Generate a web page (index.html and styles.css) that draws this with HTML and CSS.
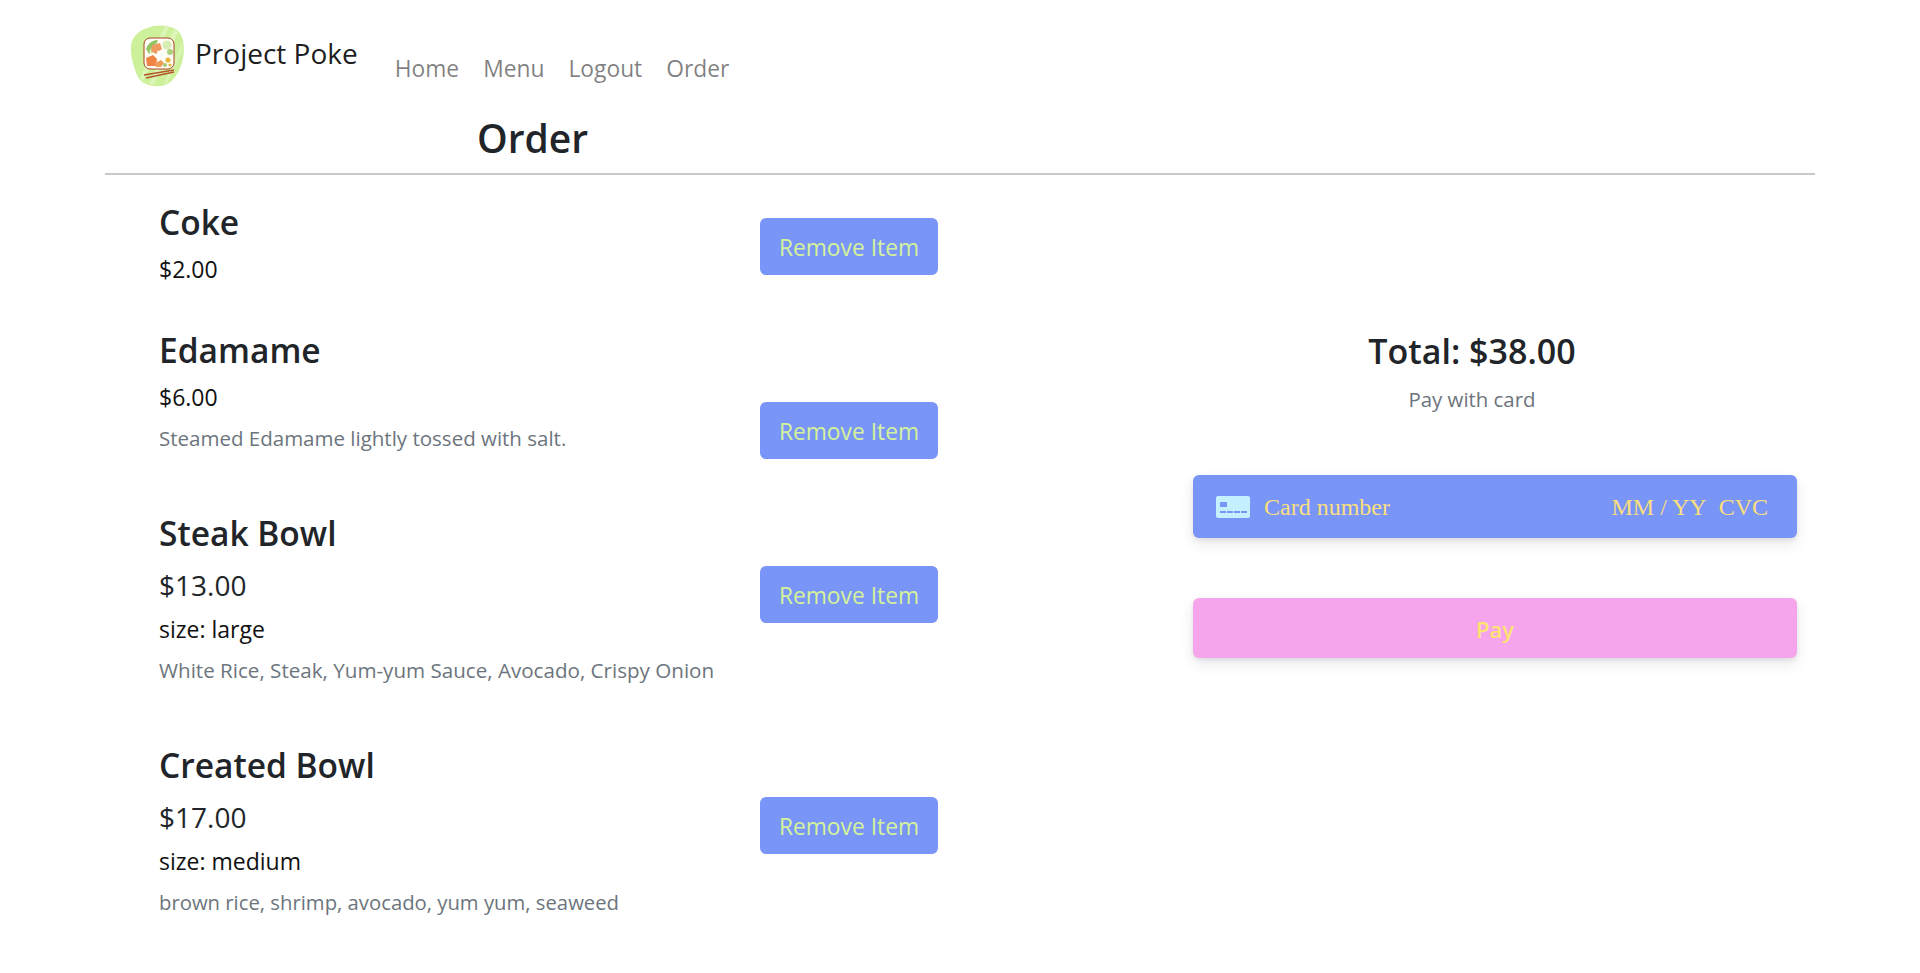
FILE: index.html
```html
<!DOCTYPE html>
<html lang="en">
<head>
    <meta charset="UTF-8">
    <meta name="viewport" content="width=device-width, initial-scale=1.0">
    <title>Project Poke</title>
    <link rel="stylesheet" href="styles.css">
</head>
<body>
    <div class="container">
        <nav class="navbar">
            <a class="brand" href="#">
                <svg class="brand-logo" viewBox="0 0 56 62" width="56" height="62">
                    <path d="M18 3C28 -1 41 0 48 5C55 11 56 23 54 33C52 45 44 60 32 61C20 62 11 58 8 50C5 42 1 31 2 21C3 12 9 6 18 3Z" fill="#cdf09b"/>
                    <path d="M36 1L40 2L14 56L11 53Z" fill="#dcf6b8"/>
                    <path d="M45 4L49 7L25 60L20 59Z" fill="#dcf6b8"/>
                    <path d="M53 18L54 26L38 58L34 60Z" fill="#d8f4b0"/>
                    <rect x="15" y="13" width="30" height="31" rx="6" fill="#fffdf5" stroke="#a8451f" stroke-width="1"/>
                    <path d="M17 24C19 18 24 15 29 15L26 22L20 29Z" fill="#8fc463"/>
                    <path d="M20 26L27 18L29 21L23 29Z" fill="#d6edb4"/>
                    <circle cx="38" cy="20" r="4.5" fill="#d6edb4"/>
                    <circle cx="41" cy="27" r="3" fill="#a9d27a"/>
                    <path d="M23 20L31 18L33 24L27 29L22 26Z" fill="#ef9a5e"/>
                    <path d="M17 33L24 30L28 34L27 41L18 41Z" fill="#ee8344"/>
                    <path d="M26 38L32 35L35 38L32 42L27 42Z" fill="#f09a5c"/>
                    <path d="M28 26L36 25L37 33L30 34Z" fill="#fdfdf8"/>
                    <circle cx="39" cy="35" r="2.6" fill="#e8b63c"/>
                    <circle cx="36" cy="40" r="2" fill="#9fca70"/>
                    <circle cx="41" cy="40" r="1.6" fill="#e8b63c"/>
                    <path d="M15 50L45 45M17 53L45 47" stroke="#b5552a" stroke-width="1.4"/>
                </svg>
                <span class="brand-name">Project Poke</span>
            </a>
            <ul class="nav-links">
                <li><a href="#">Home</a></li>
                <li><a href="#">Menu</a></li>
                <li><a href="#">Logout</a></li>
                <li><a href="#">Order</a></li>
            </ul>
        </nav>

        <h1 class="page-title">Order</h1>

        <div class="order-row">
            <div class="order-items">
                <div class="item item-coke">
                    <div class="item-info">
                        <h3>Coke</h3>
                        <p class="price-small">$2.00</p>
                    </div>
                    <button class="remove-btn">Remove Item</button>
                </div>
                <div class="item item-edamame">
                    <div class="item-info">
                        <h3>Edamame</h3>
                        <p class="price-small">$6.00</p>
                        <p class="desc">Steamed Edamame lightly tossed with salt.</p>
                    </div>
                    <button class="remove-btn">Remove Item</button>
                </div>
                <div class="item item-steak">
                    <div class="item-info">
                        <h3>Steak Bowl</h3>
                        <p class="price">$13.00</p>
                        <p class="size">size: large</p>
                        <p class="desc">White Rice, Steak, Yum-yum Sauce, Avocado, Crispy Onion</p>
                    </div>
                    <button class="remove-btn">Remove Item</button>
                </div>
                <div class="item item-created">
                    <div class="item-info">
                        <h3>Created Bowl</h3>
                        <p class="price">$17.00</p>
                        <p class="size">size: medium</p>
                        <p class="desc">brown rice, shrimp, avocado, yum yum, seaweed</p>
                    </div>
                    <button class="remove-btn">Remove Item</button>
                </div>
            </div>

            <div class="checkout">
                <h3 class="total">Total: $38.00</h3>
                <p class="pay-note">Pay with card</p>
                <div class="card-field">
                    <svg class="card-icon" viewBox="0 0 34 22" width="34" height="22">
                        <rect width="34" height="22" rx="2" fill="#c4f0ff"/>
                        <rect x="4" y="6" width="7" height="5" fill="#7995f7"/>
                        <path d="M4 16H31" stroke="#7995f7" stroke-width="2" stroke-dasharray="6 1"/>
                    </svg>
                    <span class="card-number">Card number</span>
                    <span class="card-date">MM / YY</span>
                    <span class="card-cvc">CVC</span>
                </div>
                <button class="pay-btn">Pay</button>
            </div>
        </div>
    </div>
</body>
</html>
```

FILE: styles.css
```css
* {
    box-sizing: border-box;
}

body {
    margin: 0;
    min-height: 100vh;
    font-family: "Open Sans", "Noto Sans", sans-serif;
    font-size: 24px;
    line-height: 36px;
    color: #212529;
    background-color: #fff;
}

a {
    text-decoration: none;
}

.container {
    width: 1710px;
    margin: 0 auto;
}

.navbar {
    display: flex;
    align-items: flex-start;
    height: 108px;
    padding: 25px 24px 0;
}

.brand {
    display: flex;
    align-items: flex-start;
    gap: 10px;
    color: rgba(0, 0, 0, 0.9);
    font-size: 28px;
    line-height: 45px;
}

.brand-logo {
    flex: none;
}

.brand-name {
    padding-top: 6px;
}

.nav-links {
    display: flex;
    gap: 24px;
    list-style: none;
    margin: 0;
    padding: 25px 0 0 37px;
}

.nav-links a {
    color: rgba(0, 0, 0, 0.5);
    font-size: 22.8px;
}

.page-title {
    margin: 0;
    height: 67px;
    padding-left: 372px;
    font-size: 39px;
    line-height: 60px;
    font-weight: 600;
    border-bottom: 2px solid #c8c8c8;
}

.order-row {
    display: flex;
}

.order-items {
    flex: none;
    width: 833px;
    padding: 25px 0 60px 54px;
}

.item {
    display: flex;
    align-items: center;
    justify-content: space-between;
}

.item-info {
    align-self: flex-start;
}

.item-coke {
    height: 92px;
}

.item-edamame {
    margin-top: 36px;
    height: 131px;
}

.item-edamame .remove-btn {
    align-self: flex-end;
}

.item-steak {
    margin-top: 52px;
    height: 166px;
}

.item-created {
    margin-top: 66px;
    height: 165px;
}

.item h3 {
    margin: 0 0 8px;
    font-size: 33.5px;
    line-height: 44px;
    font-weight: 600;
}

.item p {
    margin: 0;
}

.price-small {
    font-size: 23px;
    line-height: 32px;
    font-weight: 500;
    color: #111;
    padding-top: 1px;
}

.price {
    font-size: 28px;
    line-height: 44px;
    font-weight: 500;
    padding-bottom: 6px;
}

.size {
    font-size: 23px;
    line-height: 32px;
    font-weight: 500;
    color: #111;
}

.desc {
    padding-top: 7px;
    color: #6c757d;
    font-size: 20.5px;
    line-height: 36px;
}

.item-steak .desc {
    font-size: 20.6px;
}

.item-created .desc {
    font-size: 20.3px;
}

.remove-btn {
    flex: none;
    width: 178px;
    height: 57px;
    padding-top: 4px;
    border: none;
    border-radius: 6px;
    background-color: #7995f7;
    color: #d5f29a;
    font: inherit;
    font-size: 22.8px;
}

.checkout {
    flex: none;
    width: 604px;
    margin-left: 255px;
    padding-top: 149px;
}

.total {
    margin: 0;
    padding-right: 46px;
    text-align: center;
    font-size: 34px;
    line-height: 54px;
    font-weight: 600;
}

.pay-note {
    margin: 0;
    padding: 3px 46px 58px 0;
    text-align: center;
    font-size: 20.4px;
    line-height: 36px;
    color: #6c757d;
}

.card-field {
    display: flex;
    align-items: center;
    height: 63px;
    padding: 0 29px 0 23px;
    margin-bottom: 60px;
    border-radius: 6px;
    background-color: #7995f7;
    color: #fadf7e;
    font-family: "Liberation Serif", serif;
    font-size: 24px;
    box-shadow: 0 6px 14px rgba(50, 50, 93, 0.1), 0 2px 4px rgba(0, 0, 0, 0.08);
}

.card-icon {
    margin-right: 14px;
}

.card-number {
    flex: 1;
}

.card-cvc {
    margin-left: 12px;
}

.pay-btn {
    display: block;
    width: 100%;
    height: 60px;
    padding-top: 3px;
    border: none;
    border-radius: 6px;
    background-color: #f6a5ec;
    color: #fde372;
    font: inherit;
    font-size: 22px;
    font-weight: 600;
    box-shadow: 0 6px 14px rgba(50, 50, 93, 0.1), 0 2px 4px rgba(0, 0, 0, 0.08);
}
```
